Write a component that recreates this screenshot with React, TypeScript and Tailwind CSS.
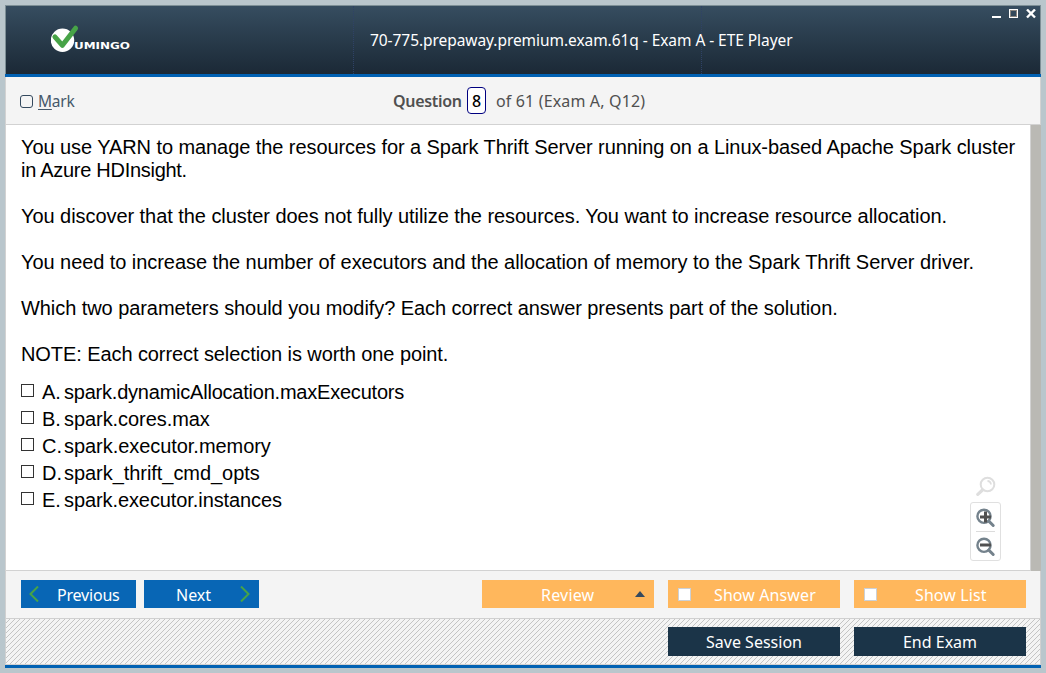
import React from "react";

const paragraphs: { text: string; cls: string }[][] = [
  [
    { text: "You use YARN to manage the resources for a Spark Thrift Server running on a Linux-based Apache Spark cluster", cls: "tracking-[-0.074px]" },
    { text: "in Azure HDInsight.", cls: "tracking-[-0.28px]" },
  ],
  [{ text: "You discover that the cluster does not fully utilize the resources. You want to increase resource allocation.", cls: "tracking-[-0.055px]" }],
  [{ text: "You need to increase the number of executors and the allocation of memory to the Spark Thrift Server driver.", cls: "tracking-[-0.06px]" }],
  [{ text: "Which two parameters should you modify? Each correct answer presents part of the solution.", cls: "tracking-[-0.066px]" }],
  [{ text: "NOTE: Each correct selection is worth one point.", cls: "tracking-[-0.083px]" }],
];

const answers: { letter: string; text: string; cls: string }[] = [
  { letter: "A.", text: "spark.dynamicAllocation.maxExecutors", cls: "tracking-[-0.22px]" },
  { letter: "B.", text: "spark.cores.max", cls: "tracking-[-0.06px]" },
  { letter: "C.", text: "spark.executor.memory", cls: "tracking-[-0.05px]" },
  { letter: "D.", text: "spark_thrift_cmd_opts", cls: "tracking-[-0.05px]" },
  { letter: "E.", text: "spark.executor.instances", cls: "tracking-[-0.09px]" },
];

function Logo() {
  return (
    <svg width="84" height="32" viewBox="0 0 84 32" className="block">
      <circle cx="11.5" cy="16.3" r="11.7" fill="#fff" />
      <path d="M3.9 12.8 L11.4 21.3 L24.6 4.2" fill="none" stroke="#47a347" strokeWidth="5" strokeLinecap="round" strokeLinejoin="round" />
      <text x="23" y="24.8" fontFamily="'DejaVu Sans', sans-serif" fontWeight="700" fontSize="9.4" fill="#fff" textLength="56" lengthAdjust="spacingAndGlyphs">UMINGO</text>
    </svg>
  );
}

function Lens({ plus }: { plus: boolean }) {
  return (
    <svg width="20" height="20" viewBox="0 0 20 20" className="block">
      <circle cx="8" cy="8.3" r="6.6" fill="none" stroke="#74828c" strokeWidth="2.4" />
      <path d="M12.8 13.1 L17.2 17.5" stroke="#74828c" strokeWidth="3" strokeLinecap="round" />
      <path d={plus ? "M4 9h11M9.5 3.5v11" : "M4 8h11"} stroke="#505050" strokeWidth="3" fill="none" />
    </svg>
  );
}

export default function App() {
  return (
    <div className="h-[673px] w-[1046px] overflow-hidden bg-[#b9c6cc] pt-[5px] pl-[5px] font-['Noto_Sans',sans-serif]">
      <div className="flex h-[663px] w-[1036px] flex-col">
        <header className="flex h-[69px] shrink-0 border border-b-0 border-[#7d8f96] bg-linear-to-b from-[#364d60] to-[#1b2936] text-white">
          <div className="w-[348px] border-r border-dotted border-[#2f4266] pt-[18px] pl-[45px]"><Logo /></div>
          <div className="w-[348px] border-r border-dotted border-[#2f4266] pt-[22px] pl-4">
            <div className="text-[15.5px] leading-6 tracking-[-0.06px] whitespace-nowrap">70-775.prepaway.premium.exam.61q - Exam A - ETE Player</div>
          </div>
          <div className="flex flex-1 justify-end pt-[3px] pr-[3px]">
            <svg width="46" height="11" viewBox="0 0 46 11" shapeRendering="crispEdges">
              <path d="M1 7h9v2H1z" fill="#fff" />
              <path d="M18.5 .5h8v8h-8z" fill="none" stroke="#fff" />
              <path d="M19.5 1.5h6v6h-6z" fill="none" stroke="#8b8680" />
              <path d="M36 .5l8 8M44 .5l-8 8" stroke="#fff" strokeWidth="2.4" shapeRendering="auto" />
            </svg>
          </div>
        </header>
        <div className="h-[3px] shrink-0 bg-[#0061b3]" />
        <div className="flex h-12 shrink-0 items-center border border-t-0 border-[#d2d2d2] bg-[#f4f4f4] text-[16px] text-[#505050]">
          <div className="flex w-[387px] items-center pt-[2px] pl-[14px]">
            <span className="mr-[5px] size-[13px] rounded-[3px] border border-[#34495e]" />
            <span className="text-[15.5px] tracking-[-0.2px] text-[#46586a]"><span className="underline underline-offset-2">M</span>ark</span>
          </div>
          <span className="w-[67px] tracking-[-0.3px] font-semibold">Question</span>
          <span className="ml-[7px] flex h-[27px] w-[19px] items-center justify-center rounded-[4px] border border-[#000080] bg-white font-medium text-black">8</span>
          <span className="ml-[10px] tracking-[0.15px] whitespace-nowrap">of 61 (Exam A, Q12)</span>
        </div>
        <main className="flex h-[446px] shrink-0 border-l border-[#d2d2d2] bg-white">
          <div className="flex w-[1025px] border-r border-b border-[#d2d2d2] pl-[15px] font-['Liberation_Sans',Arial,sans-serif] text-[20px] leading-[23px] text-black">
            <div className="w-[949px] shrink-0 pt-[11px]">
              <div className="flex flex-col gap-[23px]">
                {paragraphs.map((p, i) => (
                  <div key={i}>
                    {p.map((l) => (
                      <div key={l.text} className="whitespace-nowrap"><span className={l.cls}>{l.text}</span></div>
                    ))}
                  </div>
                ))}
              </div>
              <div className="mt-[13px]">
                {answers.map((a) => (
                  <div key={a.letter} className="flex h-[27px] items-center">
                    <span className="mb-[5px] size-[13px] border border-[#333]" />
                    <span className="ml-2 w-[22px]">{a.letter}</span>
                    <span className={a.cls}>{a.text}</span>
                  </div>
                ))}
              </div>
            </div>
            <div className="flex w-[31px] flex-col items-center pt-[351px]">
              <svg width="20" height="20" viewBox="0 0 20 20" className="block">
                <circle cx="11.5" cy="8.5" r="6.8" fill="none" stroke="#dedede" strokeWidth="2" />
                <path d="M6.5 14 L1.8 18.4" stroke="#dedede" strokeWidth="3.2" strokeLinecap="round" />
                <path d="M11.5 5a3.4 3.4 0 0 1 3.4 3.4" fill="none" stroke="#dedede" strokeWidth="1.8" />
              </svg>
              <div className="mt-[6px] flex h-[59px] w-[31px] flex-col items-center rounded-[3px] border border-[#e0e0e0] pt-[5px]">
                <Lens plus />
                <div className="mt-[3px] mb-[5px] h-px w-[19px] bg-[#dcdcdc]" />
                <Lens plus={false} />
              </div>
            </div>
          </div>
          <div className="flex-1 bg-[#bab9b4]" />
        </main>
        <div className="flex h-12 shrink-0 items-start border border-t-0 border-[#d0d0d0] bg-[#f4f4f4] pt-[9px] pl-[15px] text-[16px] text-white">
          <div className="flex h-7 w-[115px] items-center bg-[#0866b5] pl-2">
            <svg width="10" height="16" viewBox="0 0 10 16"><path d="M9 0.5 L1.5 8 L9 15.5" fill="none" stroke="#47a347" strokeWidth="2" /></svg>
            <span className="ml-[18px] pt-[2px] tracking-[-0.2px]">Previous</span>
          </div>
          <div className="ml-2 flex h-7 w-[115px] items-center justify-between bg-[#0866b5] pr-[9px] pl-8">
            <span className="pt-[2px]">Next</span>
            <svg width="10" height="16" viewBox="0 0 10 16"><path d="M1 0.5 L8.5 8 L1 15.5" fill="none" stroke="#47a347" strokeWidth="2" /></svg>
          </div>
          <div className="ml-[223px] flex h-7 w-[172px] items-center justify-between bg-[#ffb75c] pr-[9px] pl-[59px]">
            <span className="pt-[2px] tracking-[0.2px]">Review</span>
            <svg width="10" height="6" viewBox="0 0 10 6"><path d="M0 6 L5 0 L10 6z" fill="#34495e" /></svg>
          </div>
          <div className="ml-[14px] flex h-7 w-[172px] items-center bg-[#ffb75c] pl-[10px]">
            <span className="size-[13px] border border-[#ccd0d5] bg-white" />
            <span className="ml-[23px] pt-[2px] tracking-[0.1px] whitespace-nowrap">Show Answer</span>
          </div>
          <div className="ml-[14px] flex h-7 w-[172px] items-center bg-[#ffb75c] pl-[10px]">
            <span className="size-[13px] border border-[#ccd0d5] bg-white" />
            <span className="ml-[38px] pt-[2px] tracking-[0.1px] whitespace-nowrap">Show List</span>
          </div>
        </div>
        <div className="flex h-[46px] shrink-0 gap-[14px] border border-t-0 border-[#d0d0d0] bg-[#f4f4f4] bg-[repeating-linear-gradient(135deg,#f4f4f4_0px,#f4f4f4_2.6px,#c4c4c4_2.8px,#c4c4c4_3.5355px)] pt-[8px] pl-[662px] text-[16px] text-white">
          <div className="flex h-[29px] w-[172px] items-center justify-center bg-[#1b3448]"><span>Save Session</span></div>
          <div className="flex h-[29px] w-[172px] items-center justify-center bg-[#1b3448]"><span>End Exam</span></div>
        </div>
        <div className="h-[3px] shrink-0 bg-[#0061b3]" />
      </div>
    </div>
  );
}
